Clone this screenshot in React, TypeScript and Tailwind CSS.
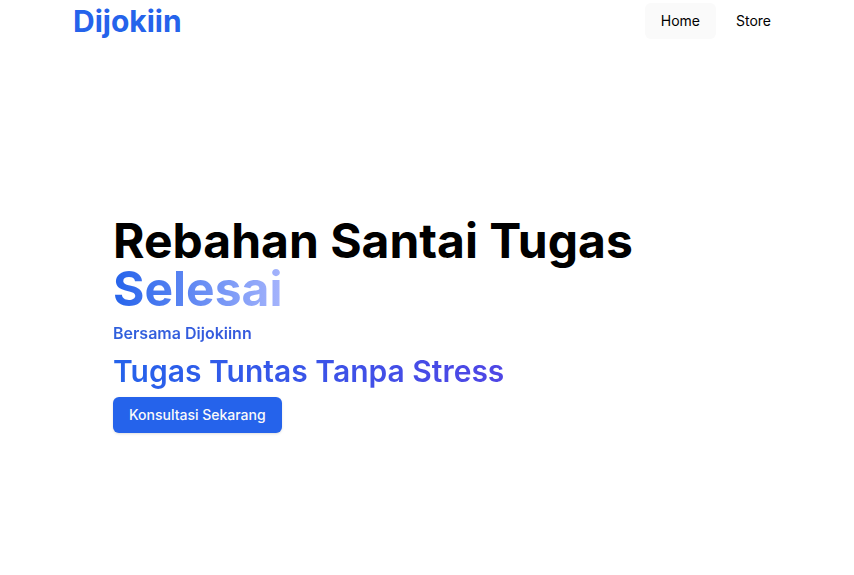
export default function App() {
  return (
    <div className="min-h-screen bg-white font-['Inter',sans-serif] text-black">
      <header className="flex items-center justify-between pr-[67px] pl-[73px]">
        <a href="#home" className="text-3xl leading-[42px] font-bold text-[#2563eb]">
          Dijokiin
        </a>
        <nav className="flex items-center gap-1" aria-label="Main">
          <a href="#home" className="flex h-9 items-center rounded-md bg-neutral-50 px-4 text-sm">
            Home
          </a>
          <a href="#store" className="flex h-9 items-center rounded-md px-4 text-sm">
            Store
          </a>
        </nav>
      </header>
      <main className="flex flex-col items-start px-[113px] pt-[175px]">
        <h1 className="text-5xl font-bold">
          <span className="block">Rebahan Santai Tugas</span>
          <span className="block w-fit bg-linear-to-r/srgb from-[#2563eb] to-[#a5b4fc] bg-clip-text text-transparent">
            Selesai
          </span>
        </h1>
        <p className="mt-2 self-stretch bg-linear-to-r/srgb from-[#2f5fdc] to-[#4f46e5] bg-clip-text font-semibold text-transparent">
          Bersama Dijokiinn
        </p>
        <h2 className="mt-2 bg-linear-to-r/srgb from-[#2563eb] to-[#4f46e5] bg-clip-text text-3xl font-semibold text-transparent">
          Tugas Tuntas Tanpa Stress
        </h2>
        <button
          type="button"
          className="mt-2 h-9 rounded-md bg-[#2563eb] px-4 text-sm font-medium text-neutral-50 shadow-sm"
        >
          Konsultasi Sekarang
        </button>
      </main>
    </div>
  );
}
